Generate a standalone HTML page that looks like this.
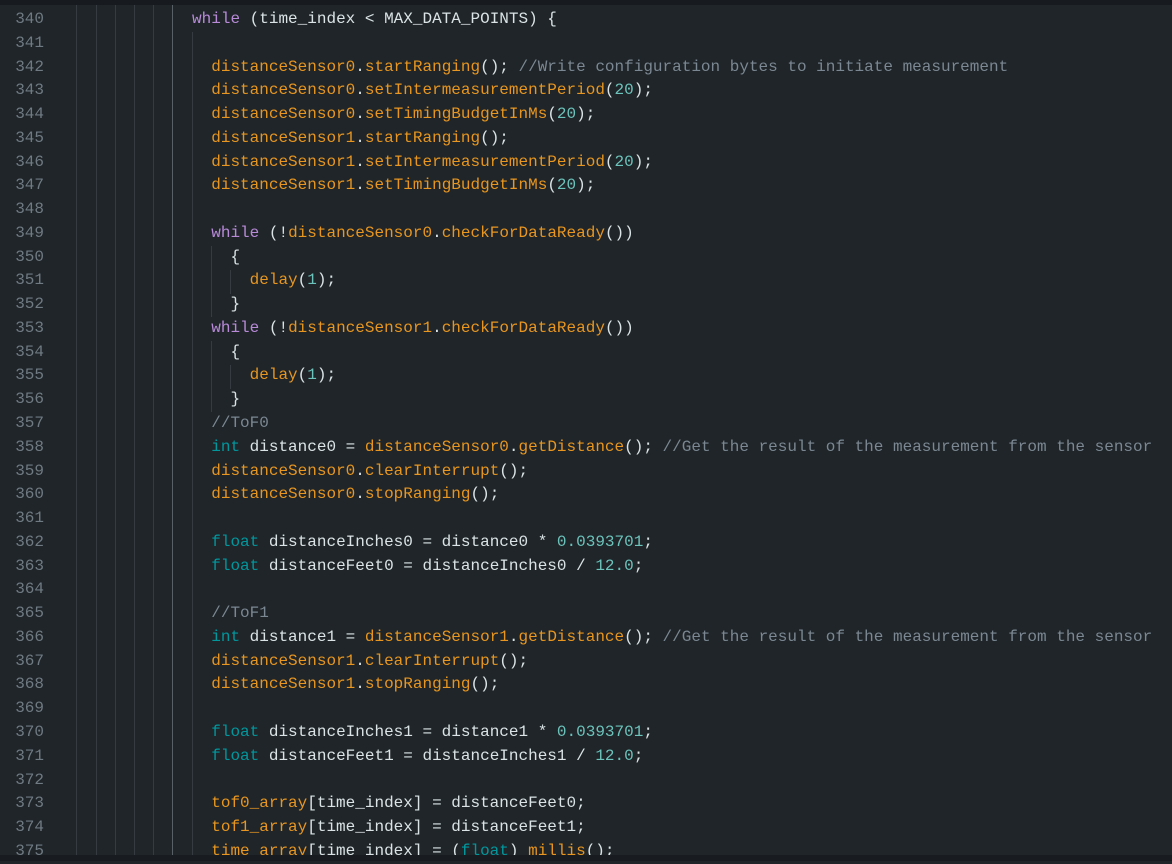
<!DOCTYPE html>
<html><head><meta charset="utf-8"><style>
html,body{margin:0;padding:0;width:1172px;height:861px;overflow:hidden;background:#1f2529;}
.top{position:absolute;left:0;top:0;width:1172px;height:5px;background:#171b1f;}
.bot{position:absolute;left:0;top:855px;width:1172px;height:6px;background:#181c20;}
.g{position:absolute;width:1px;background:#353b40;}
.ln{position:absolute;left:0;width:44px;text-align:right;color:#6f7a82;font:16px/23.77px "Liberation Mono",monospace;}
pre{position:absolute;left:0;top:8px;margin:0;font:16px/23.77px "Liberation Mono",monospace;color:#dbe3e6;white-space:pre;}
.k{color:#b88ad8}.f{color:#e8961f}.n{color:#6cc3bb}.c{color:#7b8792}.t{color:#00979d}
</style></head><body>
<div class="top"></div>
<div class="g" style="left:76px;top:5px;height:850px"></div>
<div class="g" style="left:96px;top:5px;height:850px"></div>
<div class="g" style="left:115px;top:5px;height:850px"></div>
<div class="g" style="left:134px;top:5px;height:850px"></div>
<div class="g" style="left:153px;top:5px;height:850px"></div>
<div class="g" style="left:172px;top:5px;height:850px;background:#5a6166"></div>
<div class="g" style="left:192px;top:32px;height:823px"></div>
<div class="g" style="left:211px;top:246px;height:71px"></div>
<div class="g" style="left:211px;top:341px;height:71px"></div>
<div class="g" style="left:230px;top:270px;height:24px"></div>
<div class="g" style="left:230px;top:365px;height:24px"></div>
<div class="ln" style="top:8px">340<br>341<br>342<br>343<br>344<br>345<br>346<br>347<br>348<br>349<br>350<br>351<br>352<br>353<br>354<br>355<br>356<br>357<br>358<br>359<br>360<br>361<br>362<br>363<br>364<br>365<br>366<br>367<br>368<br>369<br>370<br>371<br>372<br>373<br>374<br>375</div>
<pre>                    <span class="k">while</span> (time_index &lt; MAX_DATA_POINTS) {

                      <span class="f">distanceSensor0</span>.<span class="f">startRanging</span>(); <span class="c">//Write configuration bytes to initiate measurement</span>
                      <span class="f">distanceSensor0</span>.<span class="f">setIntermeasurementPeriod</span>(<span class="n">20</span>);
                      <span class="f">distanceSensor0</span>.<span class="f">setTimingBudgetInMs</span>(<span class="n">20</span>);
                      <span class="f">distanceSensor1</span>.<span class="f">startRanging</span>();
                      <span class="f">distanceSensor1</span>.<span class="f">setIntermeasurementPeriod</span>(<span class="n">20</span>);
                      <span class="f">distanceSensor1</span>.<span class="f">setTimingBudgetInMs</span>(<span class="n">20</span>);

                      <span class="k">while</span> (!<span class="f">distanceSensor0</span>.<span class="f">checkForDataReady</span>())
                        {
                          <span class="f">delay</span>(<span class="n">1</span>);
                        }
                      <span class="k">while</span> (!<span class="f">distanceSensor1</span>.<span class="f">checkForDataReady</span>())
                        {
                          <span class="f">delay</span>(<span class="n">1</span>);
                        }
                      <span class="c">//ToF0</span>
                      <span class="t">int</span> distance0 = <span class="f">distanceSensor0</span>.<span class="f">getDistance</span>(); <span class="c">//Get the result of the measurement from the sensor</span>
                      <span class="f">distanceSensor0</span>.<span class="f">clearInterrupt</span>();
                      <span class="f">distanceSensor0</span>.<span class="f">stopRanging</span>();

                      <span class="t">float</span> distanceInches0 = distance0 * <span class="n">0.0393701</span>;
                      <span class="t">float</span> distanceFeet0 = distanceInches0 / <span class="n">12.0</span>;

                      <span class="c">//ToF1</span>
                      <span class="t">int</span> distance1 = <span class="f">distanceSensor1</span>.<span class="f">getDistance</span>(); <span class="c">//Get the result of the measurement from the sensor</span>
                      <span class="f">distanceSensor1</span>.<span class="f">clearInterrupt</span>();
                      <span class="f">distanceSensor1</span>.<span class="f">stopRanging</span>();

                      <span class="t">float</span> distanceInches1 = distance1 * <span class="n">0.0393701</span>;
                      <span class="t">float</span> distanceFeet1 = distanceInches1 / <span class="n">12.0</span>;

                      <span class="f">tof0_array</span>[time_index] = distanceFeet0;
                      <span class="f">tof1_array</span>[time_index] = distanceFeet1;
                      <span class="f">time_array</span>[time_index] = (<span class="t">float</span>) <span class="f">millis</span>();</pre>
<div class="bot"></div>
</body></html>
